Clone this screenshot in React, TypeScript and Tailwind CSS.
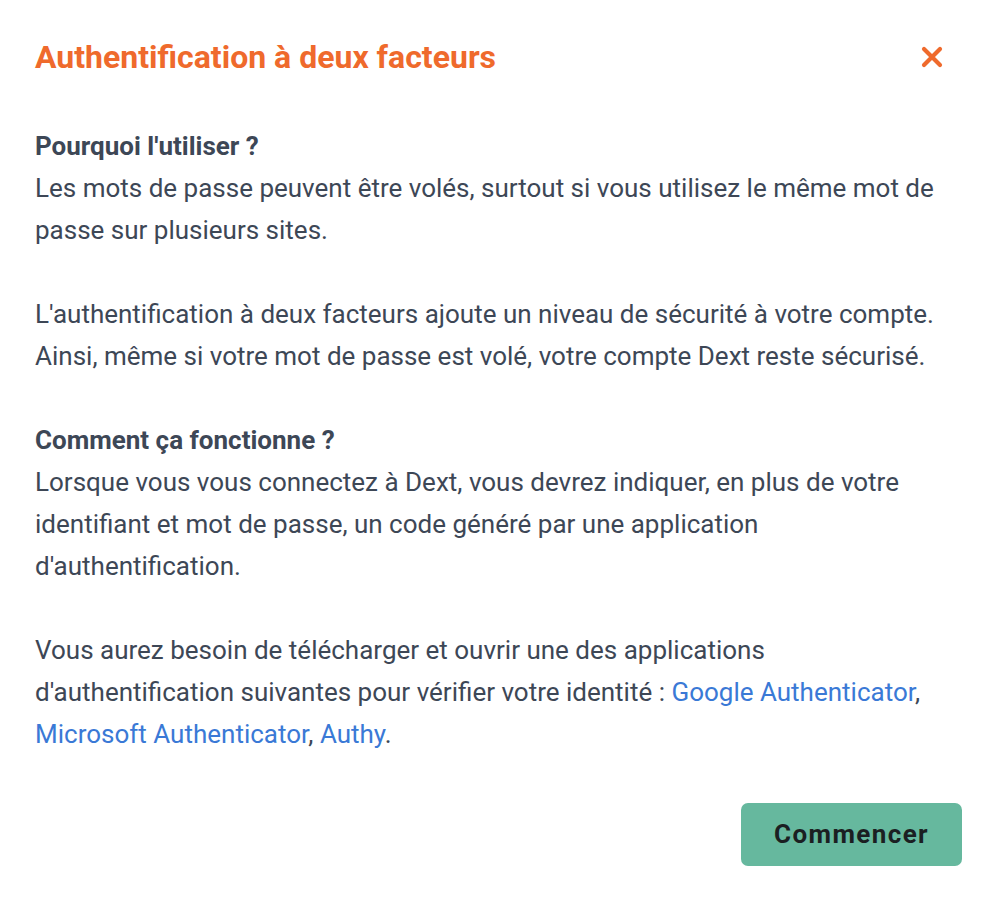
import React from "react";

const Link = ({ children }: { children: React.ReactNode }) => (
  <a href="#" className="text-[#3a79d6]">
    {children}
  </a>
);

const App = () => {
  return (
    <div
      className="w-[982px] h-[906px] bg-white pl-[35px] pr-[20px] pt-[36px]"
      style={{ fontFamily: "Roboto, 'Liberation Sans', sans-serif" }}
    >
      {/* Header */}
      <div className="flex items-center justify-between h-[42px]">
        <h1 className="text-[32px] font-bold text-[#ef6a2c]">
          Authentification à deux facteurs
        </h1>
        <button className="mr-[18px] text-[#ef6a2c]" aria-label="Fermer">
          <svg width="24" height="24" viewBox="0 0 24 24">
            <path
              d="M4 4 L20 20 M20 4 L4 20"
              stroke="currentColor"
              strokeWidth="4.2"
              strokeLinecap="round"
            />
          </svg>
        </button>
      </div>

      {/* Body */}
      <div className="mt-[47px] text-[26px] leading-[42px] text-[#3d4756]">
        <p className="font-bold">Pourquoi l'utiliser ?</p>
        <p>
          Les mots de passe peuvent être volés, surtout si vous utilisez le même
          mot de passe sur plusieurs sites.
        </p>
        <p className="mt-[42px]">
          L'authentification à deux facteurs ajoute un niveau de sécurité à
          votre compte. Ainsi, même si votre mot de passe est volé, votre compte
          Dext reste sécurisé.
        </p>
        <p className="mt-[42px] font-bold">Comment ça fonctionne ?</p>
        <p>
          Lorsque vous vous connectez à Dext, vous devrez indiquer, en plus de
          votre identifiant et mot de passe, un code généré par une application
          d'authentification.
        </p>
        <p className="mt-[42px]">
          Vous aurez besoin de télécharger et ouvrir une des applications
          d'authentification suivantes pour vérifier votre identité :{" "}
          <Link>Google Authenticator</Link>, <Link>Microsoft Authenticator</Link>
          , <Link>Authy</Link>.
        </p>
      </div>

      {/* Footer */}
      <div className="flex justify-end mt-[48px]">
        <button className="w-[221px] h-[63px] rounded-[7px] bg-[#66b89e] text-[26px] font-bold tracking-[1.4px] text-[#1b1f22]">
          Commencer
        </button>
      </div>
    </div>
  );
};

export default App;
